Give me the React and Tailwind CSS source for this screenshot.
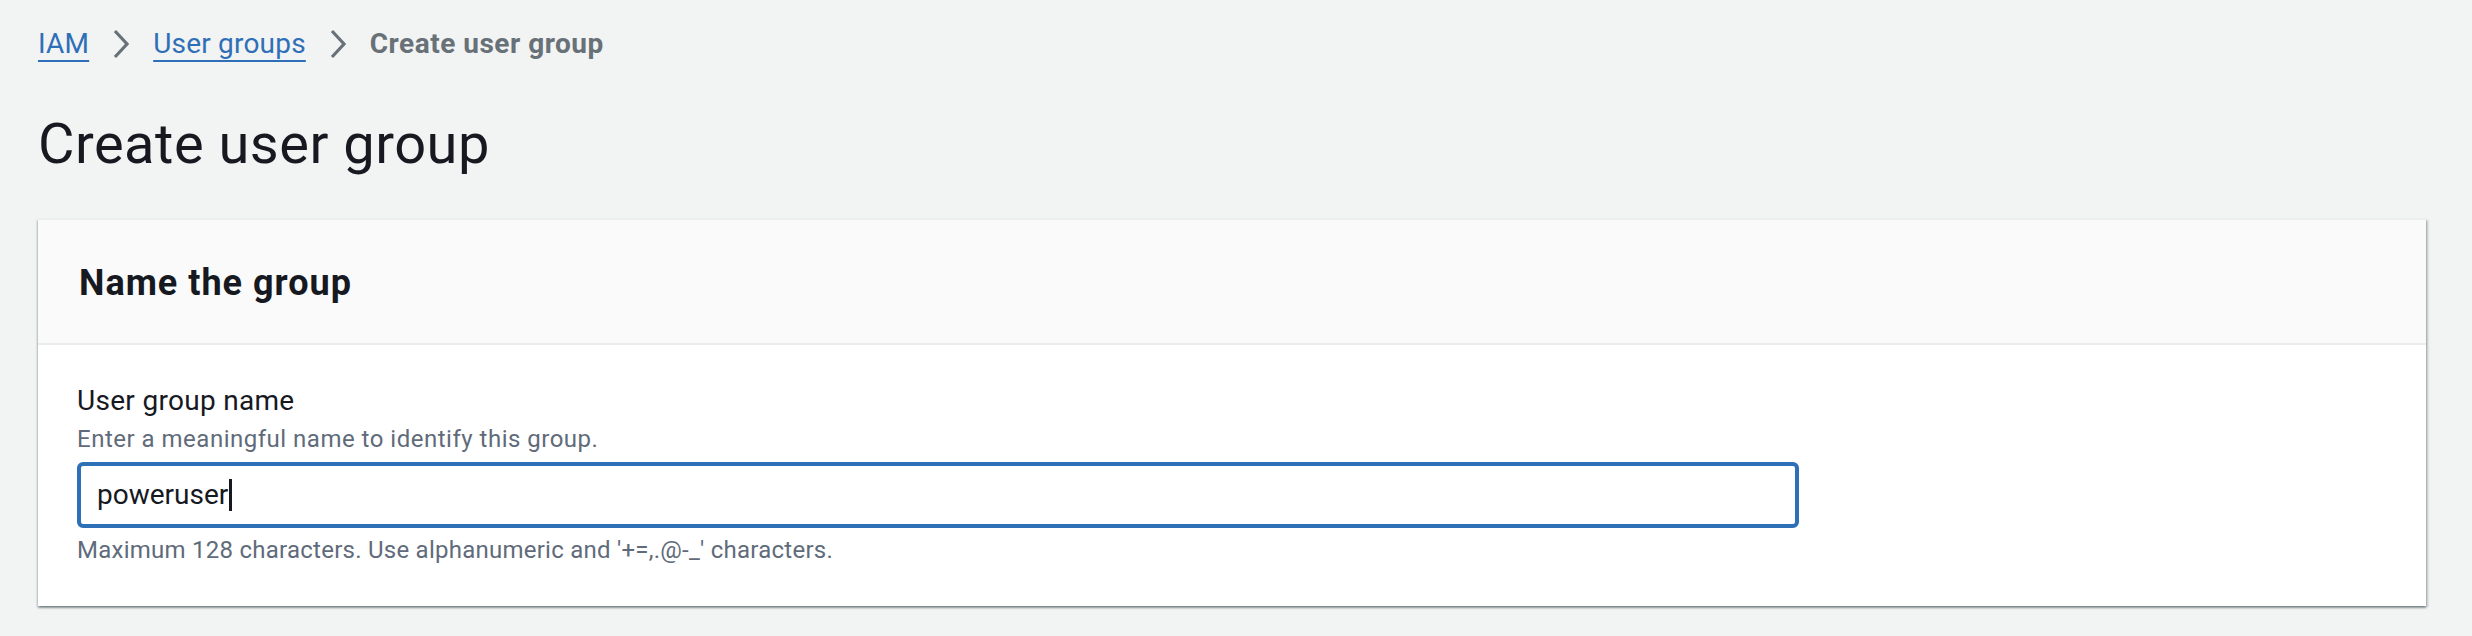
import React from 'react';

const Chevron = () => (
  <svg width="18" height="30" viewBox="0 0 18 30" className="mx-[23px]">
    <path d="M3 2 L15 15 L3 28" fill="none" stroke="#687078" strokeWidth="3.2" />
  </svg>
);

const Breadcrumbs = () => (
  <nav className="flex items-center h-[40px] text-[28px] leading-[40px] tracking-[0.2px]">
    <a className="text-[#2e6fb7] underline decoration-2 underline-offset-[7px]">IAM</a>
    <Chevron />
    <a className="text-[#2e6fb7] underline decoration-2 underline-offset-[7px]">User groups</a>
    <Chevron />
    <span className="font-bold text-[#687078] tracking-[0.5px]">Create user group</span>
  </nav>
);

const App = () => {
  return (
    <div className="min-h-[636px] bg-[#f2f3f3] pl-[38px] pr-[46px] pt-[24px] font-['Roboto',sans-serif] text-[#16191f]">
      <Breadcrumbs />

      {/* Page header */}
      <h1 className="mt-[48px] text-[56px] leading-[64px] font-normal tracking-[0.5px]">Create user group</h1>

      {/* Card */}
      <div className="mt-[43px] bg-white border-t border-[#eaeded] shadow-[0_2px_2px_0_rgba(0,28,36,0.35),2px_1px_2px_0_rgba(0,28,36,0.2),-1px_1px_2px_0_rgba(0,28,36,0.15)]">
        <div className="bg-[#fafafa] border-b-2 border-[#eaeded] pl-[41px] pt-[41px] pb-[38px]">
          <h2 className="text-[36px] leading-[44px] font-bold tracking-[1px]">Name the group</h2>
        </div>
        <div className="pl-[39px] pt-[36px] pb-[40px]">
          <div className="text-[28px] leading-[40px] tracking-[0.3px]">User group name</div>
          <div className="mt-[2px] text-[24px] leading-[32px] text-[#5f6b7a] tracking-[0.5px]">
            Enter a meaningful name to identify this group.
          </div>
          <div className="mt-[7px] w-[1722px] h-[66px] border-4 border-[#2e70b8] rounded-[6px] bg-white flex items-center pl-[16px] text-[28px]">
            <span>poweruser</span>
            <span className="ml-[1px] w-[3px] h-[32px] bg-[#16191f]" />
          </div>
          <div className="mt-[6px] text-[24px] leading-[32px] text-[#5f6b7a] tracking-[0.25px]">
            Maximum 128 characters. Use alphanumeric and '+=,.@-_' characters.
          </div>
        </div>
      </div>
    </div>
  );
};

export default App;
